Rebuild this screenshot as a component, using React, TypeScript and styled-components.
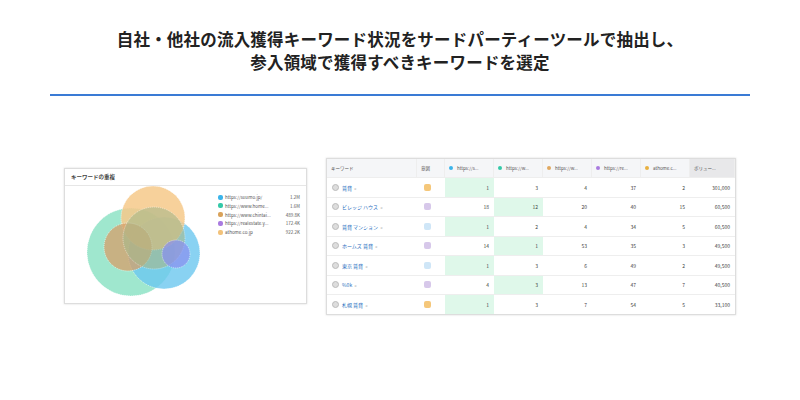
import React from "react";
import styled, { createGlobalStyle } from "styled-components";

const Global = createGlobalStyle`
  body { margin: 0; background: #fff; font-family: "Noto Sans CJK JP", "Noto Sans", sans-serif; }
`;

const Page = styled.div`
  width: 800px;
  height: 400px;
  display: flex;
  flex-direction: column;
  align-items: center;
`;

const Title = styled.h1`
  margin: 28px 0 0;
  font-size: 16.5px;
  line-height: 23px;
  font-weight: 700;
  color: #222;
  text-align: center;
  letter-spacing: 0.2px;
`;

const Rule = styled.div`
  width: 700px;
  height: 2px;
  background: #3a7bd5;
  margin-top: 20px;
`;

const Body = styled.div`
  width: 672px;
  display: flex;
  justify-content: space-between;
  align-items: flex-start;
  margin-top: 62px;
`;

const Card = styled.div`
  width: 241px;
  height: 134px;
  margin-top: 10px;
  border: 1px solid #ddd;
  box-shadow: 0 0 2px rgba(0, 0, 0, 0.15);
  display: flex;
  flex-direction: column;
`;

const CardHead = styled.div`
  height: 16px;
  border-bottom: 1px solid #e6e6e6;
  font-size: 5.5px;
  font-weight: 700;
  color: #444;
  display: flex;
  align-items: center;
  padding-left: 6px;
`;

const CardBody = styled.div`
  flex: 1;
  display: flex;
  position: relative;
`;

const Legend = styled.div`
  margin: 8px 0 0 auto;
  width: 82px;
  padding-right: 6px;
  display: flex;
  flex-direction: column;
  gap: 2.8px;
`;

const LegendRow = styled.div`
  display: flex;
  align-items: center;
  font-size: 4.5px;
  color: #555;
  height: 6px;
`;

const Dot = styled.span<{ $c: string }>`
  width: 5px;
  height: 5px;
  border-radius: 2px;
  background: ${(p) => p.$c};
  margin-right: 2px;
`;

const Val = styled.span`
  margin-left: auto;
`;

const Table = styled.div`
  width: 408px;
  border: 1px solid #ddd;
  box-shadow: 0 0 2px rgba(0, 0, 0, 0.15);
  display: grid;
  grid-template-columns: 90px 28px 49px 49px 49px 49px 49px 45px;
  font-size: 5px;
  color: #444;
`;

const Th = styled.div<{ $gray?: boolean }>`
  height: 18px;
  background: ${(p) => (p.$gray ? "#e8e8ea" : "#f5f6f8")};
  display: flex;
  align-items: center;
  gap: 2px;
  padding: 0 4px;
  color: #555;
  font-size: 4.5px;
  border-right: 1px solid #eee;
  white-space: nowrap;
  overflow: hidden;
`;

const Td = styled.div<{ $hl?: boolean; $num?: boolean }>`
  height: 19.5px;
  border-top: 1px solid #eee;
  box-sizing: border-box;
  background: ${(p) => (p.$hl ? "#dff8ea" : "#fff")};
  display: flex;
  align-items: center;
  justify-content: ${(p) => (p.$num ? "flex-end" : "flex-start")};
  padding: 0 5px;
  color: #444;
`;

const Kw = styled.span`
  color: #2a6fc0;
  margin-left: 3px;
`;

const Circle = styled.span`
  width: 5px;
  height: 5px;
  border-radius: 50%;
  background: #ddd;
  border: 0.5px solid #bbb;
`;

const Tag = styled.span<{ $c: string }>`
  width: 7px;
  height: 7px;
  border-radius: 2px;
  background: ${(p) => p.$c};
  margin-left: 2px;
`;

const legend = [
  ["#3bb4ea", "https://suumo.jp/", "1.2M"],
  ["#34c9a8", "https://www.home...", "1.6M"],
  ["#d9a25a", "https://www.chintai...", "489.8K"],
  ["#a97be0", "https://realestate.y...", "172.4K"],
  ["#f2c27a", "athome.co.jp", "922.2K"],
];

const heads: [string, string][] = [
  ["#3bb4ea", "https://s..."],
  ["#34c9a8", "https://w..."],
  ["#e0a860", "https://w..."],
  ["#a97be0", "https://re..."],
  ["#e8b040", "athome.c..."],
];

const rows: [string, string, number, number[], string][] = [
  ["賃貸", "#f5c77a", 0, [1, 3, 4, 37, 2], "301,000"],
  ["ビレッジ ハウス", "#d7c8ea", 1, [18, 12, 20, 40, 15], "60,500"],
  ["賃貸 マンション", "#cfe6f7", 0, [1, 2, 4, 34, 5], "60,500"],
  ["ホームズ 賃貸", "#d7c8ea", 1, [14, 1, 53, 35, 3], "49,500"],
  ["東京 賃貸", "#cfe6f7", 0, [1, 3, 6, 49, 2], "49,500"],
  ["%0k", "#d7c8ea", 1, [4, 3, 13, 47, 7], "40,500"],
  ["札幌 賃貸", "#f5c77a", 0, [1, 3, 7, 54, 5], "33,100"],
];

const Venn = () => (
  <svg width="150" height="118" viewBox="0 0 150 118" style={{ position: "absolute", left: 0, top: 0 }}>
    <g stroke="#fff" strokeWidth="0.8" strokeDasharray="1 1">
      <circle cx="66" cy="66" r="44" fill="#8fe3c6" opacity="0.85" />
      <circle cx="99" cy="67" r="36" fill="#6cc8f0" opacity="0.8" />
      <circle cx="88" cy="32" r="32" fill="#f6c98a" opacity="0.85" />
      <circle cx="63" cy="61" r="24" fill="#d6a06a" opacity="0.75" />
      <circle cx="89" cy="52" r="31" fill="#a8b88a" opacity="0.6" />
      <circle cx="111" cy="68" r="14" fill="#8a8ff0" opacity="0.7" />
    </g>
  </svg>
);

export default function App() {
  return (
    <Page>
      <Global />
      <Title>
        自社・他社の流入獲得キーワード状況をサードパーティーツールで抽出し、
        <br />
        参入領域で獲得すべきキーワードを選定
      </Title>
      <Rule />
      <Body>
        <Card>
          <CardHead>キーワードの重複</CardHead>
          <CardBody>
            <Venn />
            <Legend>
              {legend.map(([c, n, v]) => (
                <LegendRow key={n}>
                  <Dot $c={c} />
                  {n}
                  <Val>{v}</Val>
                </LegendRow>
              ))}
            </Legend>
          </CardBody>
        </Card>
        <Table>
          <Th>キーワード</Th>
          <Th>意図</Th>
          {heads.map(([c, t], i) => (
            <Th key={i}>
              <Dot $c={c} style={{ borderRadius: "50%", width: 4, height: 4 }} />
              {t}
            </Th>
          ))}
          <Th $gray>ボリュー...</Th>
          {rows.map(([kw, tc, hl, nums, vol]) => (
            <React.Fragment key={kw}>
              <Td>
                <Circle />
                <Kw>{kw}</Kw>
                <span style={{ color: "#aaa", marginLeft: 2 }}>»</span>
              </Td>
              <Td>
                <Tag $c={tc} />
              </Td>
              {nums.map((n, i) => (
                <Td key={i} $num $hl={i === hl}>
                  {n}
                </Td>
              ))}
              <Td $num>{vol}</Td>
            </React.Fragment>
          ))}
        </Table>
      </Body>
    </Page>
  );
}
